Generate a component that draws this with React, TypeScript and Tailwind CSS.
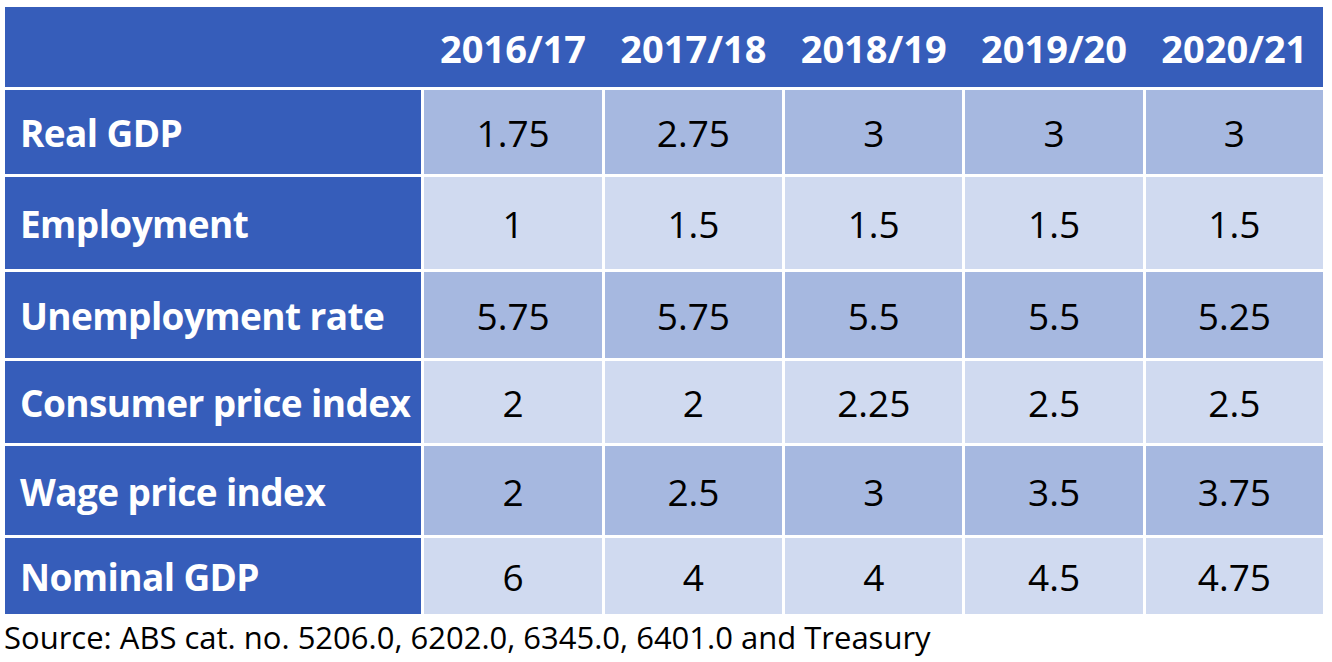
const years = ["2016/17", "2017/18", "2018/19", "2019/20", "2020/21"];

const rows = [
  { label: "Real GDP", values: ["1.75", "2.75", "3", "3", "3"], tone: "bg-[#a6b8e0]", h: "h-[84px]" },
  { label: "Employment", values: ["1", "1.5", "1.5", "1.5", "1.5"], tone: "bg-[#d0daf0]", h: "h-[92px]" },
  { label: "Unemployment rate", values: ["5.75", "5.75", "5.5", "5.5", "5.25"], tone: "bg-[#a6b8e0]", h: "h-[86px]" },
  { label: "Consumer price index", values: ["2", "2", "2.25", "2.5", "2.5"], tone: "bg-[#d0daf0]", h: "h-[82px]" },
  { label: "Wage price index", values: ["2", "2.5", "3", "3.5", "3.75"], tone: "bg-[#a6b8e0]", h: "h-[89px]" },
  { label: "Nominal GDP", values: ["6", "4", "4", "4.5", "4.75"], tone: "bg-[#d0daf0]", h: "h-[76px]" },
];

const App = () => {
  return (
    <div className="bg-white w-[1332px] h-[662px] pt-[7px] pl-[5px] font-['Open_Sans',sans-serif]">
      <div className="w-[1318px] flex flex-col gap-[3px]">
        <div className="flex gap-[3px] bg-[#365dba] h-[80px] items-center text-white font-bold text-[38px]">
          <div className="w-[418px]" />
          {years.map((y) => (
            <div key={y} className="w-[178px] text-center pt-[2px]">
              {y}
            </div>
          ))}
        </div>
        {rows.map((r) => (
          <div key={r.label} className={`flex gap-[3px] ${r.h}`}>
            <div className="w-[418px] bg-[#365dba] flex items-center pl-[15px] pt-[2px] text-white font-bold text-[37px] tracking-[-0.6px] whitespace-nowrap">
              {r.label}
            </div>
            {r.values.map((v, i) => (
              <div
                key={i}
                className={`w-[178px] ${r.tone} flex items-center justify-center pt-[2px] text-black text-[37px]`}
              >
                {v}
              </div>
            ))}
          </div>
        ))}
      </div>
      <p className="mt-[8px] -ml-[1px] leading-none text-[31px] text-black whitespace-nowrap">
        Source: ABS cat. no. 5206.0, 6202.0, 6345.0, 6401.0 and Treasury
      </p>
    </div>
  );
};

export default App;
